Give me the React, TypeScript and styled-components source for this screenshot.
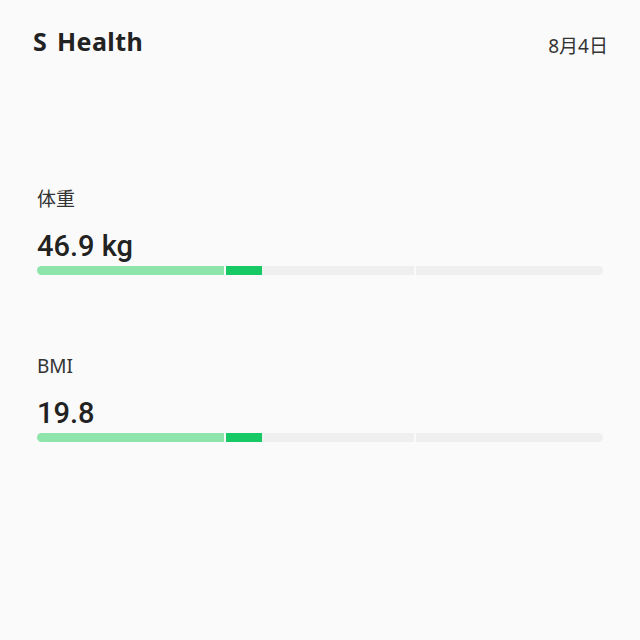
import React from 'react';
import styled, { createGlobalStyle } from 'styled-components';

const GlobalStyle = createGlobalStyle`
  html, body {
    margin: 0;
    padding: 0;
    background: #fafafa;
  }
  body {
    font-family: "Noto Sans", "Noto Sans CJK JP", sans-serif;
    color: #252525;
  }
`;

const Page = styled.div`
  width: 640px;
  height: 640px;
  background: #fafafa;
  box-sizing: border-box;
  padding: 24px 32px 0 37px;
  display: flex;
  flex-direction: column;
`;

const Header = styled.header`
  display: flex;
  justify-content: space-between;
  align-items: center;
  margin-left: -4px;
  height: 34px;
`;

const Logo = styled.h1`
  margin: 0;
  font-family: "Noto Sans", sans-serif;
  font-size: 25px;
  line-height: 34px;
  font-weight: 700;
  letter-spacing: 0.4px;
  color: #222;
  word-spacing: 3px;
`;

const DateText = styled.span`
  font-family: "Noto Sans", "Noto Sans CJK JP", sans-serif;
  font-size: 19px;
  color: #333;
  margin-top: 8px;
`;

const Metrics = styled.div`
  display: flex;
  flex-direction: column;
  gap: 78px;
  margin-top: 128px;
`;

const Metric = styled.section`
  display: flex;
  flex-direction: column;
`;

const Label = styled.div`
  font-family: "Noto Sans", "Noto Sans CJK JP", sans-serif;
  font-size: 19px;
  color: #333;
  line-height: 26px;
`;

const Value = styled.div`
  font-family: Roboto, "Noto Sans", sans-serif;
  font-size: 29px;
  font-weight: 500;
  color: #222;
  line-height: 34px;
  margin-top: 17px;
`;

const Bar = styled.div`
  display: grid;
  grid-template-columns: repeat(3, 1fr);
  gap: 2px;
  width: 566px;
  height: 9px;
  margin-top: 3px;
`;

const Segment = styled.div<{ $first?: boolean; $last?: boolean }>`
  overflow: hidden;
  background: #efefef;
  border-radius: ${({ $first, $last }) =>
    $first ? '5px 0 0 5px' : $last ? '0 5px 5px 0' : '0'};
`;

const Fill = styled.div<{ $tone: 'light' | 'dark' }>`
  height: 100%;
  background: ${({ $tone }) => ($tone === 'light' ? '#8de5ab' : '#17c964')};
`;

type MetricData = { label: string; value: string; fills: number[] };

const metrics: MetricData[] = [
  { label: '体重', value: '46.9 kg', fills: [1, 0.19, 0] },
  { label: 'BMI', value: '19.8', fills: [1, 0.19, 0] },
];

const App: React.FC = () => (
  <>
    <GlobalStyle />
    <Page>
      <Header>
        <Logo>S Health</Logo>
        <DateText>8月4日</DateText>
      </Header>
      <Metrics>
        {metrics.map((m) => (
          <Metric key={m.label}>
            <Label>{m.label}</Label>
            <Value>{m.value}</Value>
            <Bar>
              {m.fills.map((f, i) => (
                <Segment key={i} $first={i === 0} $last={i === m.fills.length - 1}>
                  {f > 0 && (
                    <Fill $tone={i === 0 ? 'light' : 'dark'} style={{ width: `${f * 100}%` }} />
                  )}
                </Segment>
              ))}
            </Bar>
          </Metric>
        ))}
      </Metrics>
    </Page>
  </>
);

export default App;
